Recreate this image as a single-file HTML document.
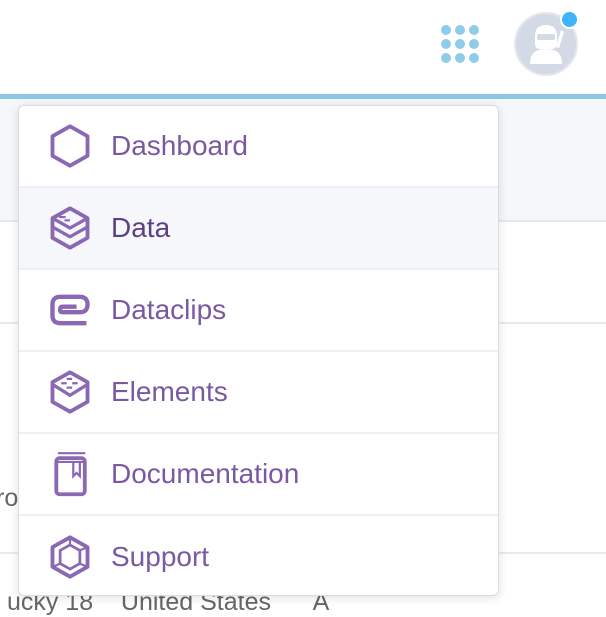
<!DOCTYPE html>
<html><head><style>
*{margin:0;padding:0;box-sizing:border-box}
body{width:606px;height:602px;overflow:hidden;background:#fff;font-family:"Liberation Sans",sans-serif;position:relative}
.hdr{position:absolute;left:0;top:0;width:606px;height:94px;background:#fff}
.bar{position:absolute;left:0;top:94px;width:606px;height:5px;background:#8cc8e6}
.row1{position:absolute;left:0;top:99px;width:606px;height:123px;background:#f6f7fa;border-bottom:2px solid #e6e8ef}
.line{position:absolute;left:0;width:606px;height:2px;background:#e8eaf0}
.btm{position:absolute;left:0;top:588px;font-size:25px;color:#666;white-space:nowrap}
.ro{position:absolute;left:-4px;top:484px;font-size:25px;color:#666}
.menu{position:absolute;left:18px;top:105px;width:481px;height:491px;background:#fff;border:1px solid #d9dce4;border-radius:6px;box-shadow:0 2px 10px rgba(0,0,0,.12);overflow:hidden}
.it{height:82px;border-bottom:2px solid #eef0f4;position:relative;display:flex;align-items:center}
.it:last-child{border-bottom:none}
.it.hv{background:#f6f7fb}
.it svg{position:absolute;left:28px;top:50%;margin-top:-23px}
.it span{position:absolute;left:92px;font-size:28px;color:#7a59a3;letter-spacing:0}
.it.hv span{color:#5d4083}
.dots{position:absolute;left:441px;top:25px}
.dots i{position:absolute;width:10px;height:10px;border-radius:50%;background:#8fcbea}
.av{position:absolute;left:514px;top:12px;width:64px;height:64px;border-radius:50%;background:#d3d9e5;border:2px solid #e6e8ee}
.badge{position:absolute;left:560px;top:10px;width:19px;height:19px;border-radius:50%;background:#3fb4f8;border:2px solid #fff}
</style></head><body>
<div class="hdr"></div>
<div class="bar"></div>
<div class="row1"></div>
<div class="line" style="top:322px"></div>
<div class="line" style="top:552px"></div>
<div class="ro">ro</div>
<div class="btm">&nbsp;ucky 18&nbsp;&nbsp;&nbsp;&nbsp;United States&nbsp;&nbsp;&nbsp;&nbsp;&nbsp;&nbsp;A</div>
<div class="dots">
<i style="left:0;top:0"></i><i style="left:14px;top:0"></i><i style="left:28px;top:0"></i>
<i style="left:0;top:14px"></i><i style="left:14px;top:14px"></i><i style="left:28px;top:14px"></i>
<i style="left:0;top:28px"></i><i style="left:14px;top:28px"></i><i style="left:28px;top:28px"></i>
</div>
<div class="av">
<svg width="60" height="60" viewBox="0 0 60 60">
<path d="M14 50 Q14 38 23 36 L37 36 Q46 38 46 50 Z" fill="#fff"/>
<path d="M19 22 Q19 11 30 11 Q41 11 41 22 L41 30 Q41 36 30 36 Q19 36 19 30Z" fill="#fff"/>
<rect x="21" y="20" width="18" height="6" rx="2" fill="#d3d9e5"/>
<path d="M45 16 L48 18 L43 34 L40 33Z" fill="#fff"/>
</svg>
</div>
<div class="badge"></div>
<div class="menu">
<div class="it"><svg width="46" height="46" viewBox="0 0 42 42"><path d="M21 3 L37 12 L37 30 L21 39 L5 30 L5 12Z" fill="none" stroke="#8a68b4" stroke-width="3.5" stroke-linejoin="round"/></svg><span>Dashboard</span></div>
<div class="it hv"><svg width="46" height="46" viewBox="0 0 42 42"><path d="M21 3 L37 12 L37 30 L21 39 L5 30 L5 12Z" fill="none" stroke="#8a68b4" stroke-width="3.5" stroke-linejoin="round"/><path d="M5 20 L21 29 L37 20 M5 12 L21 21 L37 12" fill="none" stroke="#8a68b4" stroke-width="3"/><path d="M11 11h6 M16 14h5" stroke="#8a68b4" stroke-width="2"/></svg><span>Data</span></div>
<div class="it"><svg width="46" height="46" viewBox="0 0 42 42"><path d="M36 33 L12 33 Q5 33 5 26 L5 16 Q5 9 12 9 L30 9 Q37 9 37 16 Q37 23 30 23 L14 23 Q12 23 12 21 Q12 18 14 18 L27 18" fill="none" stroke="#8a68b4" stroke-width="4"/></svg><span>Dataclips</span></div>
<div class="it"><svg width="46" height="46" viewBox="0 0 42 42"><path d="M21 3 L37 12 L37 30 L21 39 L5 30 L5 12Z" fill="none" stroke="#8a68b4" stroke-width="3.5" stroke-linejoin="round"/><path d="M5 14 L21 24 L37 14" fill="none" stroke="#8a68b4" stroke-width="3"/><path d="M18 9h5 M13 13h5 M23 13h5 M18 17h5" stroke="#8a68b4" stroke-width="2"/></svg><span>Elements</span></div>
<div class="it"><svg width="46" height="46" viewBox="0 0 42 42"><path d="M10 2h25" stroke="#8a68b4" stroke-width="2"/><rect x="8.5" y="6.5" width="26" height="33" rx="3" fill="none" stroke="#8a68b4" stroke-width="3.5"/><path d="M9 10h25" stroke="#8a68b4" stroke-width="2"/><path d="M24 11 L24 23 L27 20 L30 23 L30 11" fill="none" stroke="#8a68b4" stroke-width="2"/></svg><span>Documentation</span></div>
<div class="it"><svg width="46" height="46" viewBox="0 0 42 42"><path d="M21 3 L37 12 L37 30 L21 39 L5 30 L5 12Z" fill="none" stroke="#8a68b4" stroke-width="3.5" stroke-linejoin="round"/><path d="M21 10 L30 15 L30 27 L21 32 L12 27 L12 15Z" fill="none" stroke="#8a68b4" stroke-width="2.5"/><path d="M21 3v7 M37 12l-7 3 M5 30l7-3 M30 27l7 3" stroke="#8a68b4" stroke-width="2"/></svg><span>Support</span></div>
</div>
</body></html>
